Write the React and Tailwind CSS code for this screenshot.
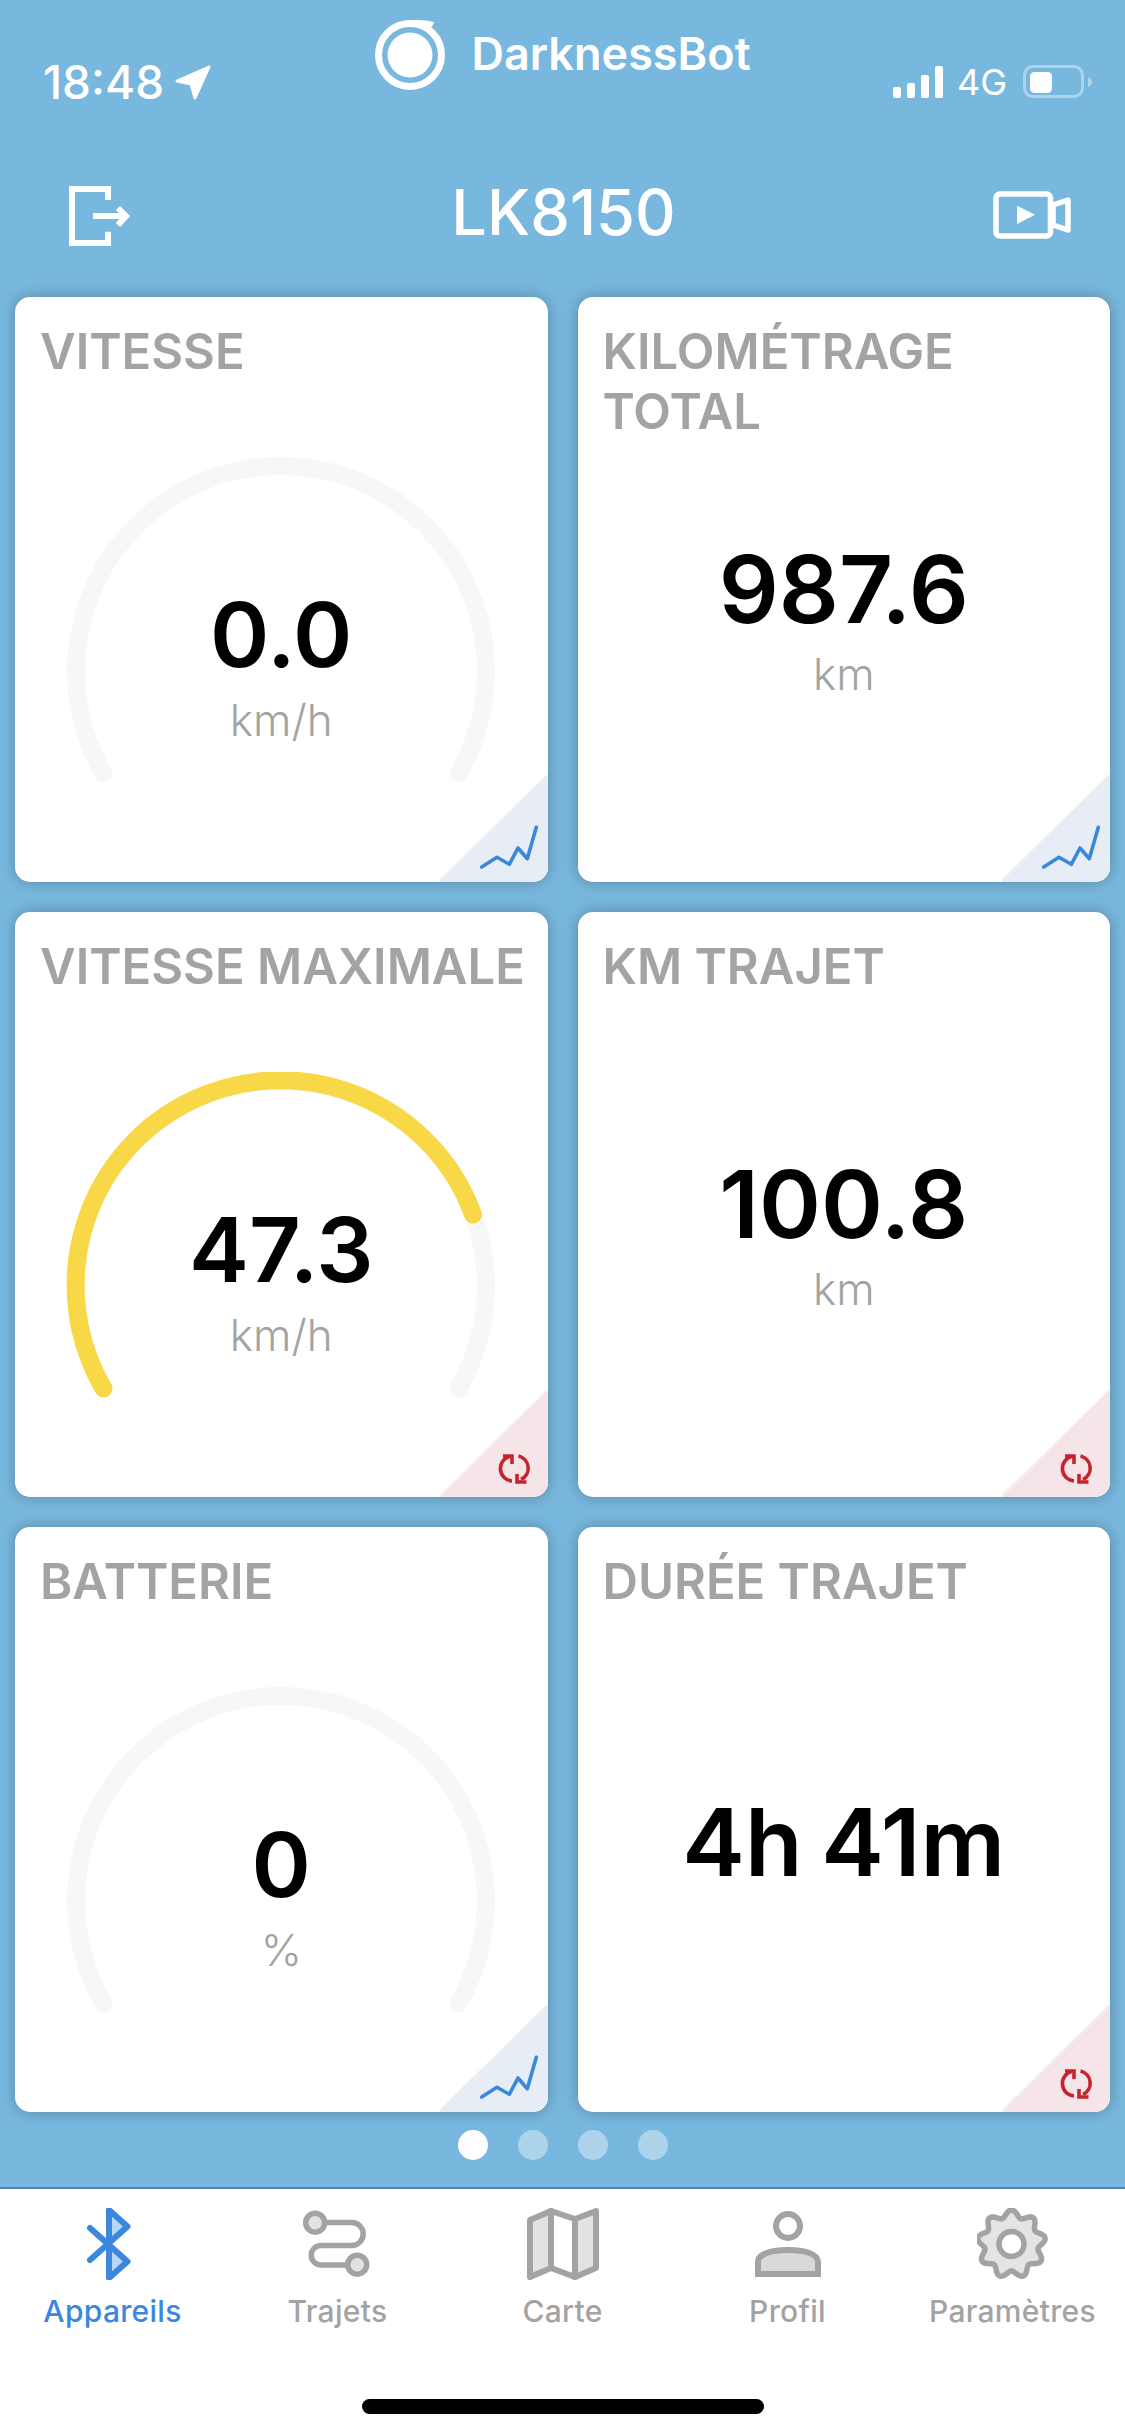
import React from 'react';

const BLUE = '#3a87dd';
const GRAY = '#a3a3a3';

const cards = [
  { title: 'VITESSE', value: '0.0', unit: 'km/h', gauge: true, corner: 'chart' },
  { title: 'KILOMÉTRAGE TOTAL', value: '987.6', unit: 'km', corner: 'chart' },
  { title: 'VITESSE MAXIMALE', value: '47.3', unit: 'km/h', gauge: true, progress: 'M37.5 316.5A205 205 0 1 1 407 142.5', corner: 'reset' },
  { title: 'KM TRAJET', value: '100.8', unit: 'km', corner: 'reset' },
  { title: 'BATTERIE', value: '0', unit: '%', gauge: true, corner: 'chart' },
  { title: 'DURÉE TRAJET', value: '4h 41m', corner: 'reset' },
];

// wavy gear outline, 9 teeth
const gearPath = () => {
  const pts = [];
  for (let i = 0; i < 180; i++) {
    const a = (i / 180) * Math.PI * 2;
    const r = 30.5 + 3.6 * Math.cos(9 * a);
    pts.push(`${(34.5 + r * Math.sin(a)).toFixed(2)} ${(36 - r * Math.cos(a)).toFixed(2)}`);
  }
  return 'M' + pts.join('L') + 'Z';
};

function Corner({ kind }) {
  const chart = kind === 'chart';
  return (
    <svg width="108" height="107" viewBox="0 0 108 107" className="absolute right-0 bottom-0">
      <polygon points="108,-2 108,107 -3,107" fill={chart ? '#eef0f2' : '#faf1f2'} />
      <polygon points="108,0 108,107 0,107" fill={chart ? '#e6edf4' : '#f5e5e8'} />
      {chart ? (
        <polyline points="41.7,92 57,82.3 69.3,89.3 78,73 87.3,83.7 96.3,52.3" fill="none" stroke={BLUE} strokeWidth="3.6" strokeLinecap="round" strokeLinejoin="round" />
      ) : (
        <g fill="none" stroke="#c8232c" strokeWidth="3.6">
          <path d="M69.5 66.5A12.5 12.5 0 0 0 72 91" />
          <path d="M63 66H72V74" />
          <path d="M78.5 66A12.5 12.5 0 0 1 81 89.5" />
          <path d="M86.5 92H77V84" />
        </g>
      )}
    </svg>
  );
}

function Gauge({ value, unit, progress }) {
  return (
    <div className="relative mx-auto mt-[75px] w-[430px] h-[340px]">
      <svg width="430" height="340" viewBox="0 0 430 340" fill="none" strokeWidth="18" strokeLinecap="round">
        <path d="M37.5 316.5A205 205 0 1 1 392.5 316.5" stroke="#f7f7f7" />
        {progress && <path d={progress} stroke="#f9d848" />}
      </svg>
      <div className="absolute inset-x-0 top-[122px] flex flex-col items-center">
        <div className="text-[90px] leading-[112px] font-semibold text-black">{value}</div>
        <div className="text-[44px] leading-[58px] font-light text-[#a3a3a3]">{unit}</div>
      </div>
    </div>
  );
}

function Card({ card }) {
  return (
    <div className="relative flex flex-col h-[585px] bg-white rounded-[15px] overflow-hidden pt-[25px] pl-[25px] shadow-[0_0_16px_rgba(0,0,0,0.28)]">
      <div className="h-[60px] text-[49px] leading-[60px] font-semibold text-[#a3a3a3] pr-[10px]">{card.title}</div>
      {card.gauge ? (
        <div className="-ml-[25px]">
          <Gauge value={card.value} unit={card.unit} progress={card.progress} />
        </div>
      ) : (
        <div className={`-ml-[25px] flex flex-col items-center ${card.unit ? 'mt-[151px]' : 'mt-[174px]'}`}>
          <div className="text-[94px] leading-[112px] font-semibold text-black [word-spacing:-5px]">{card.value}</div>
          {card.unit && <div className="text-[44px] leading-[58px] font-light text-[#a3a3a3]">{card.unit}</div>}
        </div>
      )}
      <Corner kind={card.corner} />
    </div>
  );
}

const tabs = [
  {
    label: 'Appareils',
    color: 'text-[#3a87dd]',
    icon: (
      <svg width="72" height="72" viewBox="0 0 72 72" fill="none" strokeWidth="6" strokeLinecap="round" strokeLinejoin="round" stroke={BLUE}>
        <polygon points="32.5,37 32.5,4 49,19.5" fill="#b6d6f4" stroke="none" />
        <polygon points="32.5,37 32.5,68 49,53" fill="#b6d6f4" stroke="none" />
        <path d="M13 20L50.5 53.5L32 70V2L50.5 18.5L13 52" />
      </svg>
    ),
  },
  {
    label: 'Trajets',
    color: 'text-[#a3a3a3]',
    icon: (
      <svg width="72" height="72" viewBox="0 0 72 72" fill="none" strokeWidth="5.5" stroke={GRAY}>
        <path d="M20 14.5H49.7A11.5 11.5 0 0 1 49.7 37.5H19A9.75 9.75 0 0 0 19 57H48" />
        <circle cx="13.2" cy="14.7" r="9.5" fill="#e2e2e2" />
        <circle cx="55.2" cy="56.7" r="9.5" fill="#e2e2e2" />
      </svg>
    ),
  },
  {
    label: 'Carte',
    color: 'text-[#a3a3a3]',
    icon: (
      <svg width="72" height="72" viewBox="0 0 72 72" stroke={GRAY} strokeWidth="6" strokeLinejoin="round">
        <polygon points="3,12 24,3 24,60 3,69" fill="#e2e2e2" />
        <polygon points="24,3 48,11 48,69 24,60" fill="#ffffff" />
        <polygon points="48,11 69,3 69,60 48,69" fill="#e2e2e2" />
      </svg>
    ),
  },
  {
    label: 'Profil',
    color: 'text-[#a3a3a3]',
    icon: (
      <svg width="72" height="72" viewBox="0 0 72 72" fill="none" stroke={GRAY} strokeWidth="6">
        <circle cx="36" cy="18" r="12" />
        <path d="M6 66V54C6 46 19 42 36 42C53 42 66 46 66 54V66Z" fill="#d9d9d9" />
      </svg>
    ),
  },
  {
    label: 'Paramètres',
    color: 'text-[#a3a3a3]',
    icon: (
      <svg width="72" height="72" viewBox="0 0 72 72" stroke={GRAY} strokeWidth="5.5">
        <path d={gearPath()} fill="#e4e4e4" strokeLinejoin="round" />
        <circle cx="34.5" cy="36" r="12.5" fill="#ffffff" />
      </svg>
    ),
  },
];

export default function App() {
  return (
    <div className="flex flex-col w-[1125px] h-[2436px] bg-[#79b8de] font-['Inter',sans-serif] overflow-hidden">
      {/* status bar */}
      <div className="grid grid-cols-[1fr_auto_1fr] h-[184px] text-white">
        <div className="flex items-center gap-[10px] pl-[43px] pt-[36px] h-[128px]">
          <span className="text-[46px] leading-[46px] font-medium">18:48</span>
          <svg width="38" height="37" viewBox="0 0 38 37" fill="white" stroke="white" strokeWidth="3" strokeLinejoin="round">
            <polygon points="35,3 3,17 17,20 21,34" />
          </svg>
        </div>
        <div className="flex items-start pt-[19px] gap-[25px]">
          <svg width="72" height="72" viewBox="0 0 72 72" fill="white">
            <circle cx="36" cy="36" r="22.5" />
            <circle cx="36" cy="36" r="31.5" fill="none" stroke="white" strokeWidth="7" />
            <path d="M30 2C40 0 52 1 60 3L58 8Z" />
          </svg>
          <span className="text-[45px] leading-[70px] font-semibold">DarknessBot</span>
        </div>
        <div className="flex items-center justify-end gap-[14px] pr-[32px] pt-[36px] h-[128px]">
          <div className="flex items-end gap-[5.7px] h-[32px]">
            <div className="w-[8.3px] h-[11px] rounded-[2px] bg-white" />
            <div className="w-[8.3px] h-[15px] rounded-[2px] bg-white" />
            <div className="w-[8.3px] h-[23px] rounded-[2px] bg-white" />
            <div className="w-[8.3px] h-[32px] rounded-[2px] bg-white" />
          </div>
          <span className="text-[36px] leading-[36px]">4G</span>
          <svg width="70" height="34" viewBox="0 0 70 34" className="ml-[2px]">
            <rect x="1.5" y="1.5" width="58" height="30" rx="8.5" fill="none" stroke="white" strokeOpacity="0.4" strokeWidth="3" />
            <rect x="7" y="7" width="22" height="21" rx="4.5" fill="white" />
            <path d="M65 12C67.5 13 69 15 69 17C69 19 67.5 21 65 22Z" fill="white" fillOpacity="0.4" />
          </svg>
        </div>
      </div>

      {/* header */}
      <div className="flex items-center justify-between h-[64px] pl-[66px] pr-[51px] mb-[49px] text-white">
        <svg width="66" height="64" viewBox="0 0 66 64" fill="none" stroke="white" strokeWidth="6">
          <path d="M42 16V5H6V59H42V47.7" />
          <path d="M27 32H58" />
          <path d="M52 24L60 32L52 41" />
        </svg>
        <span className="text-[63px] leading-[62px] font-medium mb-[8px] ml-[5px]">LK8150</span>
        <svg width="84" height="54" viewBox="0 0 84 54" fill="none" stroke="white" strokeWidth="5.5" strokeLinejoin="round">
          <rect x="6" y="5" width="54.5" height="42" rx="4" />
          <polygon points="63,16 78,11 78,41 63,36" />
          <polygon points="27,16.7 45,25.7 27,35" fill="white" stroke="none" />
        </svg>
      </div>

      {/* metric cards */}
      <div className="grid grid-cols-2 gap-x-[30px] gap-y-[30px] px-[15px]">
        {cards.map((card) => (
          <Card key={card.title} card={card} />
        ))}
      </div>

      {/* pager */}
      <div className="flex justify-center gap-[30px] mt-[18px] mb-[27px] pl-[1px]">
        <div className="w-[30px] h-[30px] rounded-full bg-white" />
        <div className="w-[30px] h-[30px] rounded-full bg-white/40" />
        <div className="w-[30px] h-[30px] rounded-full bg-white/40" />
        <div className="w-[30px] h-[30px] rounded-full bg-white/40" />
      </div>

      {/* tab bar */}
      <div className="flex-1 flex flex-col bg-white border-t-2 border-[#4f86ab]">
        <div className="grid grid-cols-5 pt-[19px]">
          {tabs.map((tab) => (
            <div key={tab.label} className={`flex flex-col items-center ${tab.color}`}>
              {tab.icon}
              <span className="mt-[13px] text-[30px] leading-[36px] font-medium tracking-[0.3px]">{tab.label}</span>
            </div>
          ))}
        </div>
        <div className="mt-auto mb-[22px] mx-auto w-[402px] h-[15px] rounded-full bg-black" />
      </div>
    </div>
  );
}
